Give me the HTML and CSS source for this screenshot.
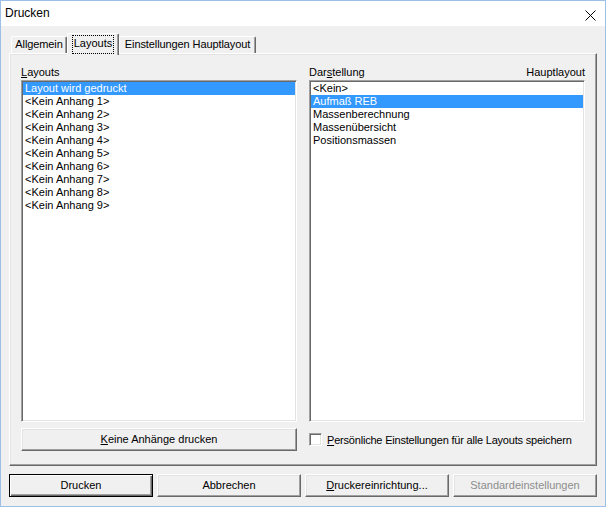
FILE: index.html
```html
<!DOCTYPE html>
<html lang="de">
<head>
<meta charset="utf-8">
<title>Drucken</title>
<link rel="stylesheet" href="styles.css">
</head>
<body>
<div class="window">
  <div class="titlebar">
    <span class="title">Drucken</span>
    <span class="close">
      <svg width="11" height="11" viewBox="0 0 11 11"><path d="M0.5 0.5 L10.5 10.5 M10.5 0.5 L0.5 10.5" stroke="#000" stroke-width="1" fill="none"/></svg>
    </span>
  </div>
  <div class="body">
    <div class="tabs">
      <div class="tab tab-allgemein">Allgemein</div>
      <div class="tab tab-active"><span class="focus">Layouts</span></div>
      <div class="tab tab-einst">Einstellungen Hauptlayout</div>
    </div>
    <div class="panel">
      <div class="cols">
        <div class="col">
          <div class="label"><u>L</u>ayouts</div>
          <div class="listbox">
            <div class="item selected">Layout wird gedruckt</div>
            <div class="item">&lt;Kein Anhang 1&gt;</div>
            <div class="item">&lt;Kein Anhang 2&gt;</div>
            <div class="item">&lt;Kein Anhang 3&gt;</div>
            <div class="item">&lt;Kein Anhang 4&gt;</div>
            <div class="item">&lt;Kein Anhang 5&gt;</div>
            <div class="item">&lt;Kein Anhang 6&gt;</div>
            <div class="item">&lt;Kein Anhang 7&gt;</div>
            <div class="item">&lt;Kein Anhang 8&gt;</div>
            <div class="item">&lt;Kein Anhang 9&gt;</div>
          </div>
          <div class="btn"><span><u>K</u>eine Anhänge drucken</span></div>
        </div>
        <div class="col">
          <div class="label label-row"><span>Dar<u>s</u>tellung</span><span>Hauptlayout</span></div>
          <div class="listbox">
            <div class="item">&lt;Kein&gt;</div>
            <div class="item selected">Aufmaß REB</div>
            <div class="item">Massenberechnung</div>
            <div class="item">Massenübersicht</div>
            <div class="item">Positionsmassen</div>
          </div>
          <div class="check">
            <span class="box"></span>
            <span class="check-text"><u>P</u>ersönliche Einstellungen für alle Layouts speichern</span>
          </div>
        </div>
      </div>
    </div>
    <div class="buttons">
      <div class="btn btn-default"><span>Drucken</span></div>
      <div class="btn"><span>Abbrechen</span></div>
      <div class="btn"><span><u>D</u>ruckereinrichtung...</span></div>
      <div class="btn btn-disabled"><span>Standardeinstellungen</span></div>
    </div>
  </div>
</div>
</body>
</html>
```

FILE: styles.css
```css
* { box-sizing: border-box; }
html, body { margin: 0; padding: 0; }
body {
  width: 606px;
  height: 507px;
  font-family: "Liberation Sans", Arial, sans-serif;
  font-size: 11px;
  color: #000;
  background: #f0f0f0;
}
u { text-decoration: underline; text-underline-offset: 1px; }

.window {
  width: 606px;
  height: 507px;
  border: 1px solid #9ebfe6;
  display: flex;
  flex-direction: column;
  background: #f0f0f0;
}

.titlebar {
  height: 25px;
  background: #fff;
  display: flex;
  align-items: center;
  justify-content: space-between;
  padding-left: 4px;
  flex: none;
}
.title {
  font-size: 12px;
  position: relative;
  top: -1px;
}
.close {
  width: 30px;
  height: 25px;
  display: flex;
  align-items: center;
  justify-content: center;
  padding-top: 3px;
}
.close svg { display: block; }

.body {
  flex: 1;
  padding: 7px 8px 0 8px;
  display: flex;
  flex-direction: column;
}

.tabs {
  height: 20px;
  display: flex;
  align-items: flex-end;
  padding-left: 2px;
  flex: none;
}
.tab {
  height: 17px;
  border-top: 1px solid #fff;
  border-left: 1px solid #fff;
  border-right: 1px solid #696969;
  border-radius: 2px 2px 0 0;
  box-shadow: inset -1px 0 #a0a0a0;
  display: flex;
  align-items: center;
  justify-content: center;
  line-height: 13px;
  padding-bottom: 1px;
  background: #f0f0f0;
  white-space: nowrap;
}
.tab-allgemein { width: 56px; letter-spacing: -0.1px; }
.tab-einst { width: 137px; letter-spacing: -0.1px; }
.tab-active {
  width: 52px;
  height: 22px;
  margin-bottom: -2px;
  position: relative;
  z-index: 1;
  align-items: flex-start;
  padding-top: 1px;
}
.focus {
  border: 1px dotted #000;
  padding: 1px 1px 3px 1px;
  line-height: 13px;
}

.panel {
  height: 413px;
  flex: none;
  border: 1px solid;
  border-color: #fff #696969 #696969 #fff;
  box-shadow: inset -1px -1px #a0a0a0, inset 1px 1px #e3e3e3;
  padding: 12px 11px 14px 11px;
}
.cols {
  display: grid;
  grid-template-columns: 276px 276px;
  column-gap: 12px;
}
.col {
  display: flex;
  flex-direction: column;
}
.label {
  height: 13px;
  line-height: 13px;
  margin-bottom: 1px;
}
.label-row {
  display: flex;
  justify-content: space-between;
}

.listbox {
  height: 342px;
  background: #fff;
  border: 1px solid;
  border-color: #a0a0a0 #fff #fff #a0a0a0;
  box-shadow: inset 1px 1px #696969, inset -1px -1px #e3e3e3;
  padding: 1px;
  margin-bottom: 6px;
}
.item {
  height: 13px;
  line-height: 13px;
  padding-left: 2px;
  white-space: nowrap;
}
.item.selected {
  background: #3399ff;
  color: #fff;
}

.btn {
  height: 23px;
  border: 1px solid;
  border-color: #fff #696969 #696969 #fff;
  box-shadow: inset -1px -1px #a0a0a0, inset 1px 1px #e3e3e3;
  display: flex;
  align-items: center;
  justify-content: center;
  background: #f0f0f0;
  white-space: nowrap;
  padding-bottom: 1px;
}
.btn-default {
  border: 1px solid #000;
  box-shadow: inset 1px 1px #fff, inset -1px -1px #696969, inset -2px -2px #a0a0a0;
}
.btn-disabled { color: #8d8d8d; }

.check {
  height: 23px;
  display: flex;
  align-items: center;
  gap: 5px;
}
.box {
  width: 13px;
  height: 13px;
  background: #fff;
  border: 1px solid;
  border-color: #a0a0a0 #fff #fff #a0a0a0;
  box-shadow: inset 1px 1px #696969, inset -1px -1px #e3e3e3;
  flex: none;
}
.check-text { white-space: nowrap; letter-spacing: -0.2px; }

.buttons {
  margin-top: 8px;
  display: grid;
  grid-template-columns: repeat(4, 144px);
  column-gap: 4px;
}
```
